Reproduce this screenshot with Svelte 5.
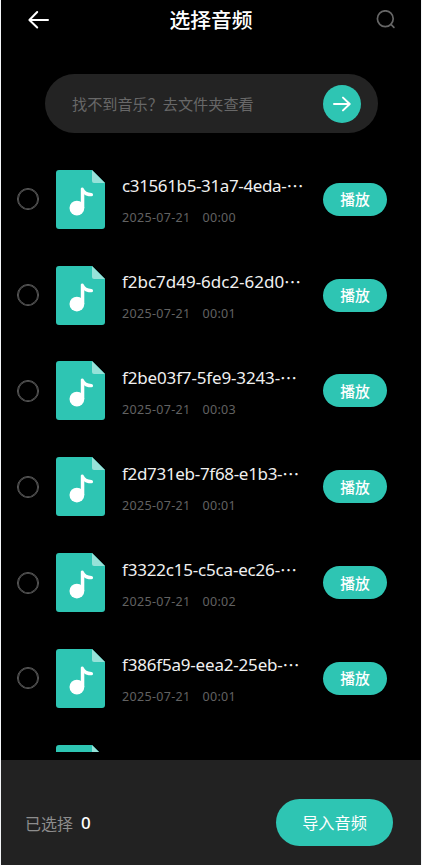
<script>
  const tracks = [
    { name: 'c31561b5-31a7-4eda-', time: '00:00', spacing: -0.37 },
    { name: 'f2bc7d49-6dc2-62d0', time: '00:01', spacing: -0.02 },
    { name: 'f2be03f7-5fe9-3243-', time: '00:03', spacing: -0.15 },
    { name: 'f2d731eb-7f68-e1b3-', time: '00:01', spacing: -0.31 },
    { name: 'f3322c15-c5ca-ec26-', time: '00:02', spacing: -0.19 },
    { name: 'f386f5a9-eea2-25eb-', time: '00:01', spacing: -0.19 }
  ];
  const date = '2025-07-21';
  let selected = $state([]);
  const toggle = (i) => {
    selected = selected.includes(i) ? selected.filter((n) => n !== i) : [...selected, i];
  };
</script>

{#snippet fileIcon()}
  <svg class="file" width="49" height="59" viewBox="0 0 49 59">
    <path d="M3 0H36L49 13V56a3 3 0 0 1-3 3H3a3 3 0 0 1-3-3V3a3 3 0 0 1 3-3Z" fill="#2ec5b3" />
    <path d="M36 0L49 13H38a2 2 0 0 1-2-2Z" fill="#96e2d9" />
    <circle cx="20.9" cy="38.1" r="7.4" fill="#fff" />
    <path d="M24.8 38V18.6a1.5 1.5 0 0 1 2.9 0C28.8 21.4 31.4 22.9 35.4 23a1.6 1.6 0 0 1 0 3.3C31.9 26.4 29.8 25.6 28.3 24.2V38Z" fill="#fff" />
  </svg>
{/snippet}

<div class="screen">
  <header>
    <button class="icon-btn" aria-label="返回">
      <svg width="22" height="20" viewBox="0 0 22 20" fill="none" stroke="#fff" stroke-width="2" stroke-linecap="round" stroke-linejoin="round"><path d="M21 10H2.6M10.2 2L2.4 10L10.2 17.5" /></svg>
    </button>
    <h1>选择音频</h1>
    <button class="icon-btn" aria-label="搜索">
      <svg width="20" height="20" viewBox="0 0 20 20" fill="none" stroke="#666" stroke-width="1.7" stroke-linecap="round"><circle cx="9.3" cy="8.7" r="7.9" /><path d="M15 14.4L17.9 17.3" /></svg>
    </button>
  </header>

  <div class="folder">
    <span>找不到音乐？去文件夹查看</span>
    <button class="go" aria-label="查看">
      <svg width="18" height="16" viewBox="0 0 18 16" fill="none" stroke="#fff" stroke-width="2" stroke-linecap="round" stroke-linejoin="round"><path d="M1 8H16.5M10 1.6L16.7 8L10 14.4" /></svg>
    </button>
  </div>

  <main>
    {#each tracks as track, i}
      <div class="row">
        <button class="check" class:on={selected.includes(i)} aria-label="选择" onclick={() => toggle(i)}></button>
        {@render fileIcon()}
        <div class="info">
          <div class="name"><span style="letter-spacing: {track.spacing}px">{track.name}</span><span class="dots">…</span></div>
          <div class="meta"><span>{date}</span><span>{track.time}</span></div>
        </div>
        <button class="play">播放</button>
      </div>
    {/each}
    <div class="row">
      <span class="check-space"></span>
      {@render fileIcon()}
    </div>
  </main>

  <footer>
    <div class="count">已选择<b>{selected.length}</b></div>
    <button class="import">导入音频</button>
  </footer>
</div>

<style>
  :global(body) { background: #f4f6f8; }
  .screen {
    box-sizing: border-box;
    width: 420px;
    height: 865px;
    margin: 0 1px;
    background: #000;
    color: #fff;
    display: flex;
    flex-direction: column;
    overflow: hidden;
    font-family: "Noto Sans", "Noto Sans CJK SC", sans-serif;
  }
  button { border: 0; padding: 0; margin: 0; background: none; color: inherit; font: inherit; display: flex; align-items: center; justify-content: center; flex: none; }
  svg { display: block; flex: none; }
  header { height: 40px; flex: none; display: flex; align-items: center; justify-content: space-between; padding: 0 25px 0 26px; }
  h1 { margin: 0 3px 2px 0; font: 500 20.8px/38px "Noto Sans CJK SC", sans-serif; }
  .folder { box-sizing: border-box; flex: none; height: 59px; margin: 34px 43px 0 44px; padding: 0 17px 0 27px; border-radius: 30px; background: #232323; display: flex; align-items: center; justify-content: space-between; }
  .folder span { font: 400 15.15px/30px "Noto Sans CJK SC", sans-serif; color: #686868; margin-bottom: 2px; }
  .go { width: 38px; height: 38px; border-radius: 50%; background: #2ec5b3; }
  main { flex: none; height: 600.5px; margin-top: 18.3px; overflow: hidden; }
  .row { height: 95.85px; display: flex; align-items: center; padding: 0 34px 0 16px; }
  .check, .check-space { box-sizing: border-box; width: 22px; height: 22px; flex: none; }
  .check { border: 1px solid #5c5c5c; border-radius: 50%; box-shadow: inset 0 0 0 0.8px #5c5c5c; }
  .check.on { background: #2ec5b3; border-color: #2ec5b3; }
  .file { margin-left: 16.5px; }
  .info { flex: 1; min-width: 0; margin-left: 17.5px; padding-top: 3px; }
  .name { font-size: 17px; line-height: 24px; white-space: nowrap; display: flex; color: #f0f0f0; }
  .dots { font-family: "Noto Sans CJK SC", sans-serif; }
  .meta { font-size: 12.5px; line-height: 18px; margin-top: 11px; display: flex; gap: 12px; color: #626262; letter-spacing: 0.32px; }
  .play { width: 64px; height: 33px; border-radius: 17px; background: #2ec5b3; font: 500 14.8px/31px "Noto Sans CJK SC", sans-serif; padding-bottom: 1px; box-sizing: border-box; }
  footer { box-sizing: border-box; height: 105px; margin-top: auto; flex: none; background: #222; display: flex; align-items: center; justify-content: space-between; padding: 20px 28px 0 24px; }
  .count { font: 400 16px/24px "Noto Sans CJK SC", sans-serif; color: #8d8d8d; display: flex; align-items: center; }
  .count b { margin-left: 8px; color: #fff; font: 500 17px/24px "Noto Sans", sans-serif; }
  .import { width: 117px; height: 47px; border-radius: 24px; background: #2ec5b3; font: 400 16.2px/47px "Noto Sans CJK SC", sans-serif; }
</style>
